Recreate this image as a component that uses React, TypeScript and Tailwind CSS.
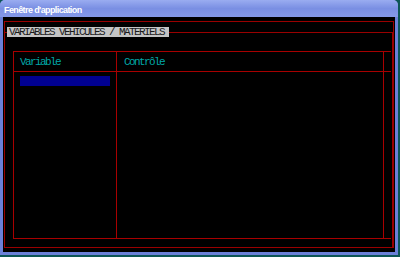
export default function App() {
  const mono = { fontFamily: '"Liberation Mono", "DejaVu Sans Mono", monospace' };

  return (
    <div className="w-[400px] h-[257px] bg-[#0d5656] overflow-hidden">
      <div className="w-[398px] h-[255px] flex flex-col rounded-t-[5px] bg-[#6b80d8] px-[3px] pb-[3px]">
        {/* title bar */}
        <div className="h-[17px] -mx-[3px] rounded-t-[5px] bg-gradient-to-b from-[#9aacf0] via-[#7a8fe3] to-[#8599e8] flex items-center pl-[4px] pt-[3px]">
          <span
            className="text-white font-bold text-[9px] leading-none tracking-[-0.6px]"
            style={{ fontFamily: '"Liberation Sans", Arial, sans-serif' }}
          >
            Fenêtre d'application
          </span>
        </div>

        {/* client area */}
        <div className="flex-1 bg-black flex flex-col pt-[4px] px-[1px] pb-[4px]">
          <div className="flex-1 flex flex-col border-t border-x border-[#9a0000] pt-[10px]">
            {/* group box */}
            <div className="flex-1 flex flex-col border-x border-b border-[#9a0000] -ml-px">
              <div className="flex items-center h-[10px] -mt-[5px] -mx-px">
                <div className="w-[3px] h-px bg-[#9a0000]" />
                <div
                  className="h-[10px] bg-[#c4c4c4] text-[#1a1a1a] text-[11px] leading-[10px] tracking-[-1.6px] pl-[2px] pr-[5px]"
                  style={mono}
                >
                  VARIABLES VEHICULES / MATERIELS
                </div>
                <div className="flex-1 h-px bg-[#9a0000]" />
              </div>

              {/* table */}
              <div className="flex-1 flex flex-col ml-[8px] mr-px mt-[14px] mb-[8px] border-y border-[#a80000]">
                <div className="h-[20px] flex border-b border-[#a80000]">
                  <div
                    className="w-[104px] border-x border-[#a80000] pl-[6px] pt-px flex items-center text-[#00a8a8] text-[11px] tracking-[-1.6px]"
                    style={mono}
                  >
                    Variable
                  </div>
                  <div
                    className="w-[267px] border-r border-[#a80000] pl-[7px] pt-px flex items-center text-[#00a8a8] text-[11px] tracking-[-1.6px]"
                    style={mono}
                  >
                    Contrôle
                  </div>
                  <div className="flex-1" />
                </div>
                <div className="flex-1 flex">
                  <div className="w-[104px] border-x border-[#a80000] pl-[6px] pt-[4px]">
                    <div className="w-[90px] h-[10px] bg-[#000090]" />
                  </div>
                  <div className="w-[267px] border-r border-[#a80000]" />
                  <div className="flex-1" />
                </div>
              </div>
            </div>
          </div>
        </div>
      </div>
    </div>
  );
}
